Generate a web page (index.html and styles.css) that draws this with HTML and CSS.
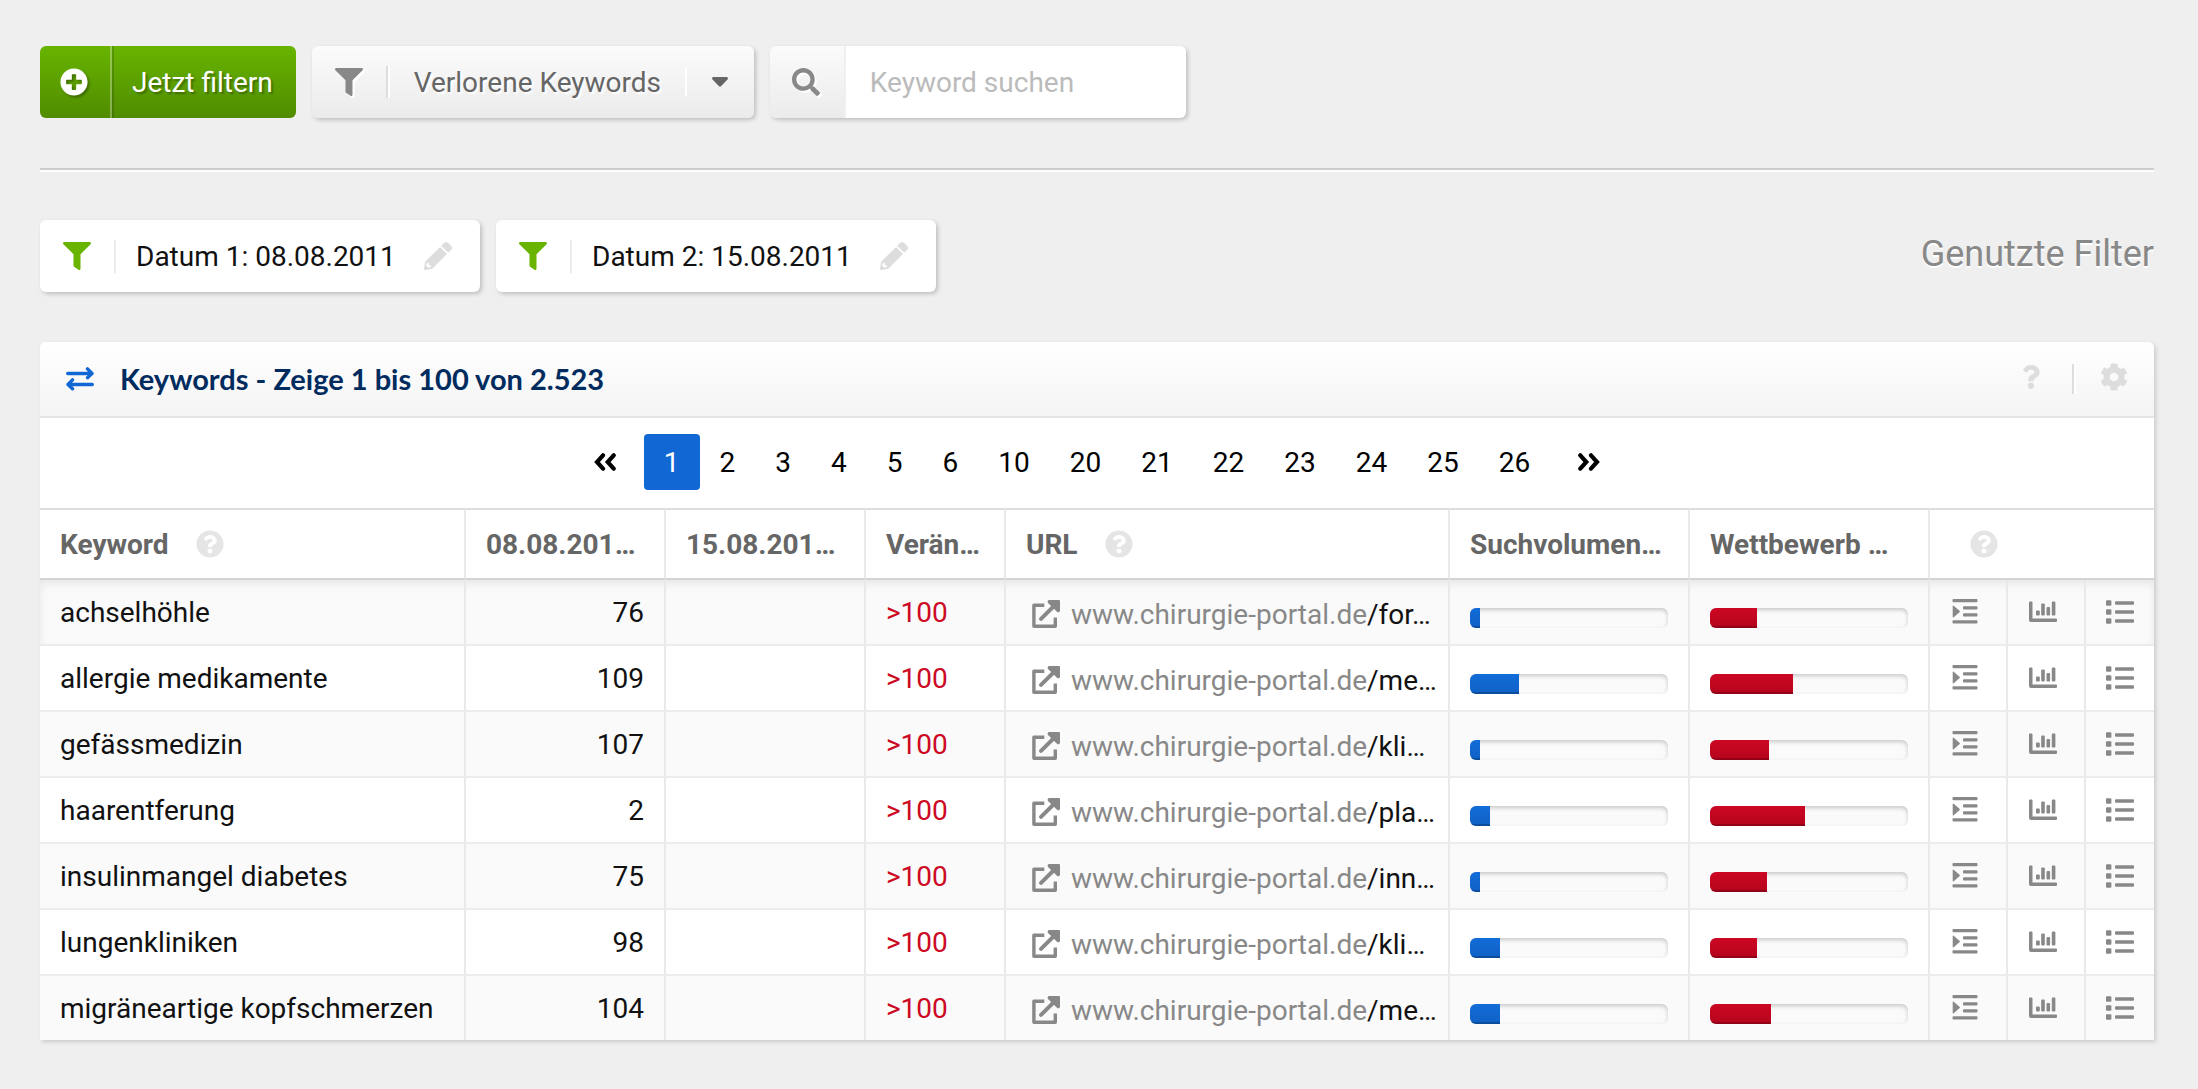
FILE: index.html
```html
<!DOCTYPE html>
<html lang="de">
<head>
<meta charset="utf-8">
<meta name="viewport" content="width=device-width, initial-scale=1">
<title>Verlorene Keywords</title>
<link rel="stylesheet" href="styles.css">
</head>
<body>
<svg class="sprite" aria-hidden="true">
  <symbol id="i-plus" viewBox="0 0 512 512"><path d="M256 8C119 8 8 119 8 256s111 248 248 248 248-111 248-248S393 8 256 8zm144 276c0 6.600-5.400 12-12 12h-92v92c0 6.600-5.400 12-12 12h-56c-6.600 0-12-5.400-12-12v-92h-92c-6.600 0-12-5.400-12-12v-56c0-6.600 5.400-12 12-12h92v-92c0-6.600 5.400-12 12-12h56c6.600 0 12 5.400 12 12v92h92c6.600 0 12 5.400 12 12v56z"/></symbol>
  <symbol id="i-filter" viewBox="0 0 512 512"><path d="M487.976 0H24.028C2.710 0-8.047 25.866 7.058 40.971L192 225.941V432c0 7.831 3.821 15.170 10.237 19.662l80 55.980C298.020 518.690 320 507.493 320 487.980V225.941l184.947-184.970C520.021 25.896 509.338 0 487.976 0z"/></symbol>
  <symbol id="i-caret" viewBox="0 0 16 10"><path d="M1.600 0h12.800c1.400 0 2 1.500 1.100 2.500L9 9.300c-.6.600-1.400.6-2 0L.5 2.500C-.4 1.500.2 0 1.600 0z"/></symbol>
  <symbol id="i-search" viewBox="0 0 512 512"><path d="M505 442.700L405.300 343c-4.500-4.500-10.600-7-17-7H372c27.600-35.300 44-79.700 44-128C416 93.100 322.900 0 208 0S0 93.100 0 208s93.100 208 208 208c48.300 0 92.700-16.400 128-44v16.300c0 6.400 2.500 12.500 7 17l99.700 99.700c9.400 9.400 24.600 9.400 33.900 0l28.300-28.300c9.400-9.400 9.400-24.600.1-34zM208 336c-70.700 0-128-57.200-128-128 0-70.700 57.200-128 128-128 70.700 0 128 57.200 128 128 0 70.700-57.200 128-128 128z"/></symbol>
  <symbol id="i-pencil" viewBox="0 0 512 512"><path d="M497.900 142.100l-46.100 46.100c-4.700 4.700-12.300 4.700-17 0l-111-111c-4.700-4.700-4.700-12.300 0-17l46.100-46.100c18.700-18.700 49.100-18.700 67.900 0l60.100 60.100c18.800 18.700 18.800 49.100 0 67.900zM284.200 99.800L21.600 362.400.4 483.900c-2.900 16.400 11.400 30.600 27.800 27.800l121.500-21.300 262.600-262.600c4.700-4.700 4.700-12.300 0-17l-111-111c-4.800-4.700-12.400-4.700-17.100 0zM60 386h28v38h38v28c-18 22-56 20-74-2-14-20-12-46 8-64z"/></symbol>
  <symbol id="i-cog" viewBox="0 0 512 512"><path d="M487.400 315.700l-42.600-24.600c4.300-23.200 4.300-47 0-70.200l42.600-24.600c4.900-2.800 7.100-8.600 5.500-14-11.100-35.600-30-67.800-54.700-94.600-3.800-4.100-10-5.100-14.800-2.300L380.800 110c-17.900-15.400-38.500-27.300-60.800-35.100V25.800c0-5.600-3.900-10.500-9.400-11.700-36.700-8.200-74.300-7.800-109.200 0-5.500 1.200-9.400 6.100-9.400 11.700V75c-22.200 7.900-42.800 19.800-60.800 35.100L88.700 85.500c-4.900-2.800-11-1.900-14.800 2.300-24.700 26.700-43.600 58.900-54.700 94.600-1.700 5.400.6 11.200 5.500 14L67.300 221c-4.300 23.200-4.300 47 0 70.200l-42.600 24.600c-4.900 2.800-7.100 8.600-5.500 14 11.100 35.600 30 67.800 54.700 94.600 3.800 4.100 10 5.100 14.800 2.300l42.600-24.600c17.900 15.400 38.500 27.300 60.800 35.100v49.200c0 5.600 3.900 10.500 9.400 11.700 36.700 8.200 74.300 7.800 109.200 0 5.500-1.200 9.400-6.100 9.400-11.700v-49.200c22.200-7.900 42.800-19.800 60.800-35.100l42.600 24.600c4.900 2.800 11 1.900 14.800-2.300 24.700-26.700 43.600-58.900 54.700-94.600 1.500-5.500-.7-11.300-5.600-14.100zM256 336c-44.100 0-80-35.900-80-80s35.900-80 80-80 80 35.900 80 80-35.900 80-80 80z"/></symbol>
  <symbol id="i-help" viewBox="0 0 512 512"><path d="M504 256c0 136.997-111.043 248-248 248S8 392.997 8 256C8 119.083 119.043 8 256 8s248 111.083 248 248zM262.655 90c-54.497 0-89.255 22.957-116.549 63.758-3.536 5.286-2.353 12.415 2.715 16.258l34.699 26.310c5.205 3.947 12.621 3.008 16.665-2.122 17.864-22.658 30.113-35.797 57.303-35.797 20.429 0 45.698 13.148 45.698 32.958 0 14.976-12.363 22.667-32.534 33.976C247.128 238.528 216 254.941 216 296v4c0 6.627 5.373 12 12 12h56c6.627 0 12-5.373 12-12v-1.333c0-28.462 83.186-29.647 83.186-106.667 0-58.002-60.165-102-116.531-102zM256 338c-25.365 0-46 20.635-46 46 0 25.364 20.635 46 46 46s46-20.636 46-46c0-25.365-20.635-46-46-46z"/></symbol>
  <symbol id="i-question" viewBox="0 0 384 512"><path d="M202.021 0C122.202 0 70.503 32.703 29.914 91.026c-7.363 10.580-5.093 25.086 5.178 32.874l43.138 32.709c10.373 7.865 25.132 6.026 33.253-4.148 25.049-31.381 43.630-49.449 82.757-49.449 30.764 0 68.816 19.799 68.816 49.631 0 22.552-18.617 34.134-48.993 51.164-35.423 19.860-82.299 44.576-82.299 106.405V320c0 13.255 10.745 24 24 24h72.471c13.255 0 24-10.745 24-24v-5.773c0-42.860 125.268-44.645 125.268-160.627C377.504 66.256 286.902 0 202.021 0zM192 373.459c-38.196 0-69.271 31.075-69.271 69.271 0 38.195 31.075 69.270 69.271 69.270s69.271-31.075 69.271-69.271-31.075-69.270-69.271-69.270z"/></symbol>
  <symbol id="i-swap" viewBox="0 0 28 24"><g fill="none" stroke="currentColor" stroke-width="3.400" stroke-linecap="round" stroke-linejoin="round"><path d="M1.700 6.500H26M21.500 1.900L26 6.500l-4.500 4.200M26.300 17.500H2M6.500 12.900L2 17.500l4.500 4.300"/></g></symbol>
  <symbol id="i-prev" viewBox="0 0 22 18"><path fill="none" stroke="currentColor" stroke-width="4.200" stroke-linecap="round" stroke-linejoin="miter" d="M9 2.300L3 9l6 6.700M19.700 2.300l-6 6.700 6 6.700"/></symbol>
  <symbol id="i-next" viewBox="0 0 22 18"><path fill="none" stroke="currentColor" stroke-width="4.200" stroke-linecap="round" stroke-linejoin="miter" d="M2.300 2.300l6 6.700-6 6.700M13 2.300L19 9l-6 6.700"/></symbol>
  <symbol id="i-ext" viewBox="0 0 28 28"><path fill="none" stroke="currentColor" stroke-width="3.400" stroke-linejoin="round" d="M12.300 5.300H1.900v20.900h21.400v-8.700"/><path fill="none" stroke="currentColor" stroke-width="4" stroke-linecap="round" d="M9 18.800L23.500 4.500"/><path d="M17.500 0H27q1 0 1 1v9.500c0 2-2 2.200-3 1.200L16.500 3.500C15 2 15.600 0 17.500 0z"/></symbol>
  <symbol id="i-indent" viewBox="0 0 28 28"><path d="M2.500 1h23q1 0 1 1v1.200q0 1-1 1h-23q-1 0-1-1V2q0-1 1-1zM13 8.200h12.500q1 0 1 1v1.200q0 1-1 1H13q-1 0-1-1V9.200q0-1 1-1zM13 15.200h12.500q1 0 1 1v1.200q0 1-1 1H13q-1 0-1-1v-1.200q0-1 1-1zM2.500 22.300h23q1 0 1 1v1.200q0 1-1 1h-23q-1 0-1-1v-1.200q0-1 1-1zM1.700 8.200q0-1 1-.4l6 5.200q.6.500 0 1l-6 5.200q-1 .6-1-.4z"/></symbol>
  <symbol id="i-chart" viewBox="0 0 28 28"><path d="M1 3.500h1.500q1 0 1 1v16H27q1 0 1 1v1.500q0 1-1 1H2q-2 0-2-2V4.500q0-1 1-1zM8 12.500h1.800q1 0 1 1v3q0 1-1 1H8q-1 0-1-1v-3q0-1 1-1zM13.200 5.500h1.600q1 0 1 1v10q0 1-1 1h-1.600q-1 0-1-1v-10q0-1 1-1zM18.500 9h1.600q1 0 1 1v6.500q0 1-1 1h-1.600q-1 0-1-1V10q0-1 1-1zM23.800 3.500h1.600q1 0 1 1v12q0 1-1 1h-1.600q-1 0-1-1v-12q0-1 1-1z"/></symbol>
  <symbol id="i-list" viewBox="0 0 28 28"><path d="M1 2.300h3.400q1 0 1 1v3.400q0 1-1 1H1q-1 0-1-1V3.300q0-1 1-1zM1 11.300h3.400q1 0 1 1v3.400q0 1-1 1H1q-1 0-1-1v-3.400q0-1 1-1zM1 20.300h3.400q1 0 1 1v3.400q0 1-1 1H1q-1 0-1-1v-3.400q0-1 1-1zM10 3.300h17q1 0 1 1v1.400q0 1-1 1H10q-1 0-1-1V4.300q0-1 1-1zM10 12.300h17q1 0 1 1v1.400q0 1-1 1H10q-1 0-1-1v-1.400q0-1 1-1zM10 21.300h17q1 0 1 1v1.400q0 1-1 1H10q-1 0-1-1v-1.400q0-1 1-1z"/></symbol>
</svg>

<header class="toolbar">
  <button class="btn-primary" type="button">
    <span class="btn-icon"><svg class="icon"><use href="#i-plus"/></svg></span>
    <span class="btn-label">Jetzt filtern</span>
  </button>
  <div class="picker">
    <svg class="icon"><use href="#i-filter"/></svg>
    <span class="rule"></span>
    <select class="picker-select" aria-label="Ansicht">
      <option>Verlorene Keywords</option>
    </select>
    <span class="rule-light"></span>
    <svg class="caret"><use href="#i-caret"/></svg>
  </div>
  <form class="search">
    <button class="search-button" type="button" aria-label="Suchen"><svg class="icon"><use href="#i-search"/></svg></button>
    <input class="search-input" type="text" placeholder="Keyword suchen" aria-label="Keyword suchen">
  </form>
</header>

<hr class="divider">

<section class="filters">
  <div class="chip">
    <svg class="icon chip-funnel"><use href="#i-filter"/></svg>
    <span class="chip-label">Datum 1: 08.08.2011</span>
    <button class="chip-edit" type="button" aria-label="Datum 1 bearbeiten"><svg class="icon"><use href="#i-pencil"/></svg></button>
  </div>
  <div class="chip">
    <svg class="icon chip-funnel"><use href="#i-filter"/></svg>
    <span class="chip-label">Datum 2: 15.08.2011</span>
    <button class="chip-edit" type="button" aria-label="Datum 2 bearbeiten"><svg class="icon"><use href="#i-pencil"/></svg></button>
  </div>
  <h2 class="filters-title">Genutzte Filter</h2>
</section>

<main class="panel">
  <div class="panel-head">
    <svg class="icon-swap"><use href="#i-swap"/></svg>
    <h1 class="panel-title">Keywords - Zeige 1 bis 100 von 2.523</h1>
    <button class="panel-tool" type="button" aria-label="Hilfe"><svg class="icon-question"><use href="#i-question"/></svg></button>
    <span class="rule"></span>
    <button class="panel-tool" type="button" aria-label="Einstellungen"><svg class="icon"><use href="#i-cog"/></svg></button>
  </div>

  <nav class="pages" aria-label="Seiten">
    <a class="page-step" href="#" aria-label="Zurück"><svg class="icon-step"><use href="#i-prev"/></svg></a>
    <a class="page page-current" href="#" aria-current="page">1</a>
    <a class="page" href="#">2</a>
    <a class="page" href="#">3</a>
    <a class="page" href="#">4</a>
    <a class="page" href="#">5</a>
    <a class="page" href="#">6</a>
    <a class="page" href="#">10</a>
    <a class="page" href="#">20</a>
    <a class="page" href="#">21</a>
    <a class="page" href="#">22</a>
    <a class="page" href="#">23</a>
    <a class="page" href="#">24</a>
    <a class="page" href="#">25</a>
    <a class="page" href="#">26</a>
    <a class="page-step" href="#" aria-label="Weiter"><svg class="icon-step"><use href="#i-next"/></svg></a>
  </nav>

  <table class="keywords">
    <colgroup>
      <col class="c-keyword"><col class="c-date"><col class="c-date"><col class="c-change"><col class="c-url"><col class="c-bar"><col class="c-bar"><col class="c-action"><col class="c-action"><col class="c-action-last">
    </colgroup>
    <thead>
      <tr>
        <th>Keyword<svg class="icon help"><use href="#i-help"/></svg></th>
        <th>08.08.201…</th>
        <th>15.08.201…</th>
        <th>Verän…</th>
        <th>URL<svg class="icon help"><use href="#i-help"/></svg></th>
        <th>Suchvolumen…</th>
        <th>Wettbewerb …</th>
        <th colspan="3"><svg class="icon help help-alone"><use href="#i-help"/></svg></th>
      </tr>
    </thead>
    <tbody id="rows"></tbody>
  </table>
</main>
<script src="rows.js"></script>
</body>
</html>
```
FILE: rows.js
```js
const rows = [
  ["achselhöhle", 76, "for", 5, 24],
  ["allergie medikamente", 109, "me", 25, 42],
  ["gefässmedizin", 107, "kli", 5, 30],
  ["haarentferung", 2, "pla", 10, 48],
  ["insulinmangel diabetes", 75, "inn", 5, 29],
  ["lungenkliniken", 98, "kli", 15, 24],
  ["migräneartige kopfschmerzen", 104, "me", 15, 31]
];

const action = (icon, label) =>
  `<td class="action"><button type="button" aria-label="${label}"><svg class="icon"><use href="#${icon}"/></svg></button></td>`;

const bar = (kind, value) =>
  `<td><div class="bar"><div class="fill ${kind}" style="width:${value}%"></div></div></td>`;

document.getElementById("rows").innerHTML = rows.map(([keyword, position, path, volume, competition]) => `
  <tr>
    <td>${keyword}</td>
    <td class="number">${position}</td>
    <td></td>
    <td class="change">&gt;100</td>
    <td><a class="url" href="#"><svg class="icon"><use href="#i-ext"/></svg><span>www.chirurgie-portal.de<b>/${path}…</b></span></a></td>
    ${bar("volume", volume)}
    ${bar("competition", competition)}
    ${action("i-indent", "Details")}
    ${action("i-chart", "Verlauf")}
    ${action("i-list", "Liste")}
  </tr>`).join("");
```
FILE: styles.css
```css
* { box-sizing: border-box; }

body {
  margin: 0;
  padding: 46px 44px 46px 40px;
  background: #efefef;
  color: #111;
  font: 28px/37px Roboto, "Liberation Sans", sans-serif;
}

button, input, select {
  margin: 0;
  padding: 0;
  border: 0;
  background: none;
  color: inherit;
  font: inherit;
}

svg { display: block; flex: none; fill: currentColor; }
.sprite { display: none; }
.icon { width: 28px; height: 28px; }

/* Toolbar */
.toolbar { display: flex; gap: 16px; }

.btn-primary {
  display: flex;
  align-items: center;
  height: 72px;
  border-radius: 6px;
  overflow: hidden;
  background: linear-gradient(#68b400, #508c00);
  color: #fff;
  text-shadow: 2px 2px 2px rgba(0, 0, 0, .3);
}
.btn-icon {
  display: flex;
  align-items: center;
  height: 72px;
  padding: 0 22px 0 20px;
  border-right: 2px solid rgba(255, 255, 255, .3);
  box-shadow: 2px 0 0 rgba(0, 0, 0, .15);
}
.btn-icon .icon { filter: drop-shadow(2px 2px 1px rgba(0, 0, 0, .3)); }
.btn-label { padding: 0 23px 0 20px; }

.picker, .search {
  display: flex;
  align-items: center;
  height: 72px;
  border-radius: 6px;
  background: linear-gradient(#fbfbfb, #ebebeb);
  box-shadow: 2px 2px 4px rgba(0, 0, 0, .2);
  color: #888;
}
.picker { width: 442px; padding: 0 26px 0 23px; }
.picker .icon, .search-button .icon { filter: drop-shadow(2px 2px 0 #fff); }
.rule {
  width: 2px;
  height: 32px;
  background: #ddd;
  box-shadow: 2px 0 0 #fff;
}
.picker .rule { margin-left: 23px; }
.picker-select {
  flex: 1;
  height: 72px;
  padding-left: 26px;
  appearance: none;
  color: #666;
  text-shadow: 2px 2px 2px #fff;
}
.rule-light { width: 2px; height: 28px; margin-right: 25px; background: #fff; }
.caret { width: 16px; height: 10px; color: #666; }

.search { width: 416px; overflow: hidden; }
.search-button { height: 72px; padding: 0 24px 0 22px; border-right: 2px solid #f0f0f0; }
.search-input {
  flex: 1;
  min-width: 0;
  height: 72px;
  padding: 0 24px;
  border-radius: 0 6px 6px 0;
  background: #fff;
  color: #111;
}
.search-input::placeholder { color: #bbb; opacity: 1; }

.divider {
  height: 4px;
  margin: 50px 0 48px;
  border: 0;
  border-top: 2px solid #ccc;
  background: #fff;
}

/* Active filters */
.filters { display: flex; align-items: center; gap: 16px; }
.chip {
  display: flex;
  align-items: center;
  width: 440px;
  height: 72px;
  padding: 0 28px 0 23px;
  border-radius: 6px;
  background: #fff;
  box-shadow: 2px 2px 4px rgba(0, 0, 0, .2);
}
.chip-funnel { color: #68b400; }
.chip-label {
  flex: 1;
  margin-left: 23px;
  padding-left: 20px;
  border-left: 2px solid #ececec;
  line-height: 33px;
}
.chip-edit { color: #ddd; }
.filters-title {
  margin: 0 0 4px auto;
  color: #888;
  font-size: 36px;
  font-weight: 400;
  line-height: 44px;
  text-shadow: 0 2px 0 #fff;
}

/* Keyword panel */
.panel {
  margin-top: 50px;
  border-radius: 6px 6px 0 0;
  overflow: hidden;
  background: #fff;
  box-shadow: 2px 2px 4px rgba(0, 0, 0, .15);
}
.panel-head {
  display: flex;
  align-items: center;
  height: 76px;
  padding: 0 26px;
  border-bottom: 2px solid #e4e4e4;
  background: linear-gradient(#fff, #f4f4f4);
}
.icon-swap { width: 28px; height: 24px; color: #1168d4; }
.panel-title {
  flex: 1;
  margin: 0;
  padding-left: 26px;
  color: #002b5e;
  font: 700 29px/36px Lato, sans-serif;
}
.panel-tool { padding-bottom: 4px; color: #ddd; }
.panel-head .rule { height: 30px; margin: 0 26px 0 32px; }
.icon-question { width: 18px; height: 24px; }

.pages {
  display: flex;
  justify-content: center;
  padding: 16px 0 18px;
}
.page, .page-step {
  display: flex;
  align-items: center;
  justify-content: center;
  height: 56px;
  color: #000;
  text-decoration: none;
}
.page { padding: 0 20px; }
.page-step { width: 78px; }
.page-current { border-radius: 4px; background: #1168d4; color: #fff; }
.icon-step { width: 22px; height: 18px; }

.keywords {
  width: 100%;
  table-layout: fixed;
  border-spacing: 0;
}
.c-date { width: 200px; }
.c-change { width: 140px; }
.c-url { width: 444px; }
.c-bar { width: 240px; }
.c-action { width: 78px; }
.c-action-last { width: 68px; }

th, td {
  padding: 0 0 0 20px;
  border-right: 2px solid #e9e9e9;
  text-align: left;
  white-space: nowrap;
}
th:last-child, td:last-child { border-right: 0; }
th {
  height: 72px;
  border-top: 2px solid #ddd;
  border-bottom: 2px solid #d3d3d3;
  color: #666;
  font-weight: 700;
}
.help { display: inline-block; margin: 0 0 0 27px; color: #e5e5e5; vertical-align: -4px; }
.help-alone { margin-left: 20px; }

td { height: 66px; border-bottom: 2px solid #ececec; }
tbody tr:nth-child(odd) { background: #fafafa; }
tbody tr:first-child { box-shadow: inset 0 4px 8px rgba(0, 0, 0, .08); }
tbody tr:last-child td { height: 64px; border-bottom: 0; }

.number { padding-right: 20px; text-align: right; }
.change { color: #cd0a24; }
.url {
  display: flex;
  align-items: center;
  gap: 11px;
  padding: 4px 0 0 6px;
  color: #888;
  text-decoration: none;
}
.url b { color: #111; font-weight: 400; }

.bar {
  height: 20px;
  margin: 12px 20px 0 0;
  border-radius: 6px;
  overflow: hidden;
  background: #fafafa;
  box-shadow: inset 0 2px 4px rgba(0, 0, 0, .2);
}
.fill { height: 20px; box-shadow: inset 0 -2px 0 rgba(0, 0, 0, .2); }
.volume { background: linear-gradient(#126cd8, #1060c4); }
.competition { background: linear-gradient(#cd0824, #b4041c); }

.action { padding-left: 21px; color: #888; }
.action:last-child { padding-left: 20px; }
.action button { display: block; }
```
